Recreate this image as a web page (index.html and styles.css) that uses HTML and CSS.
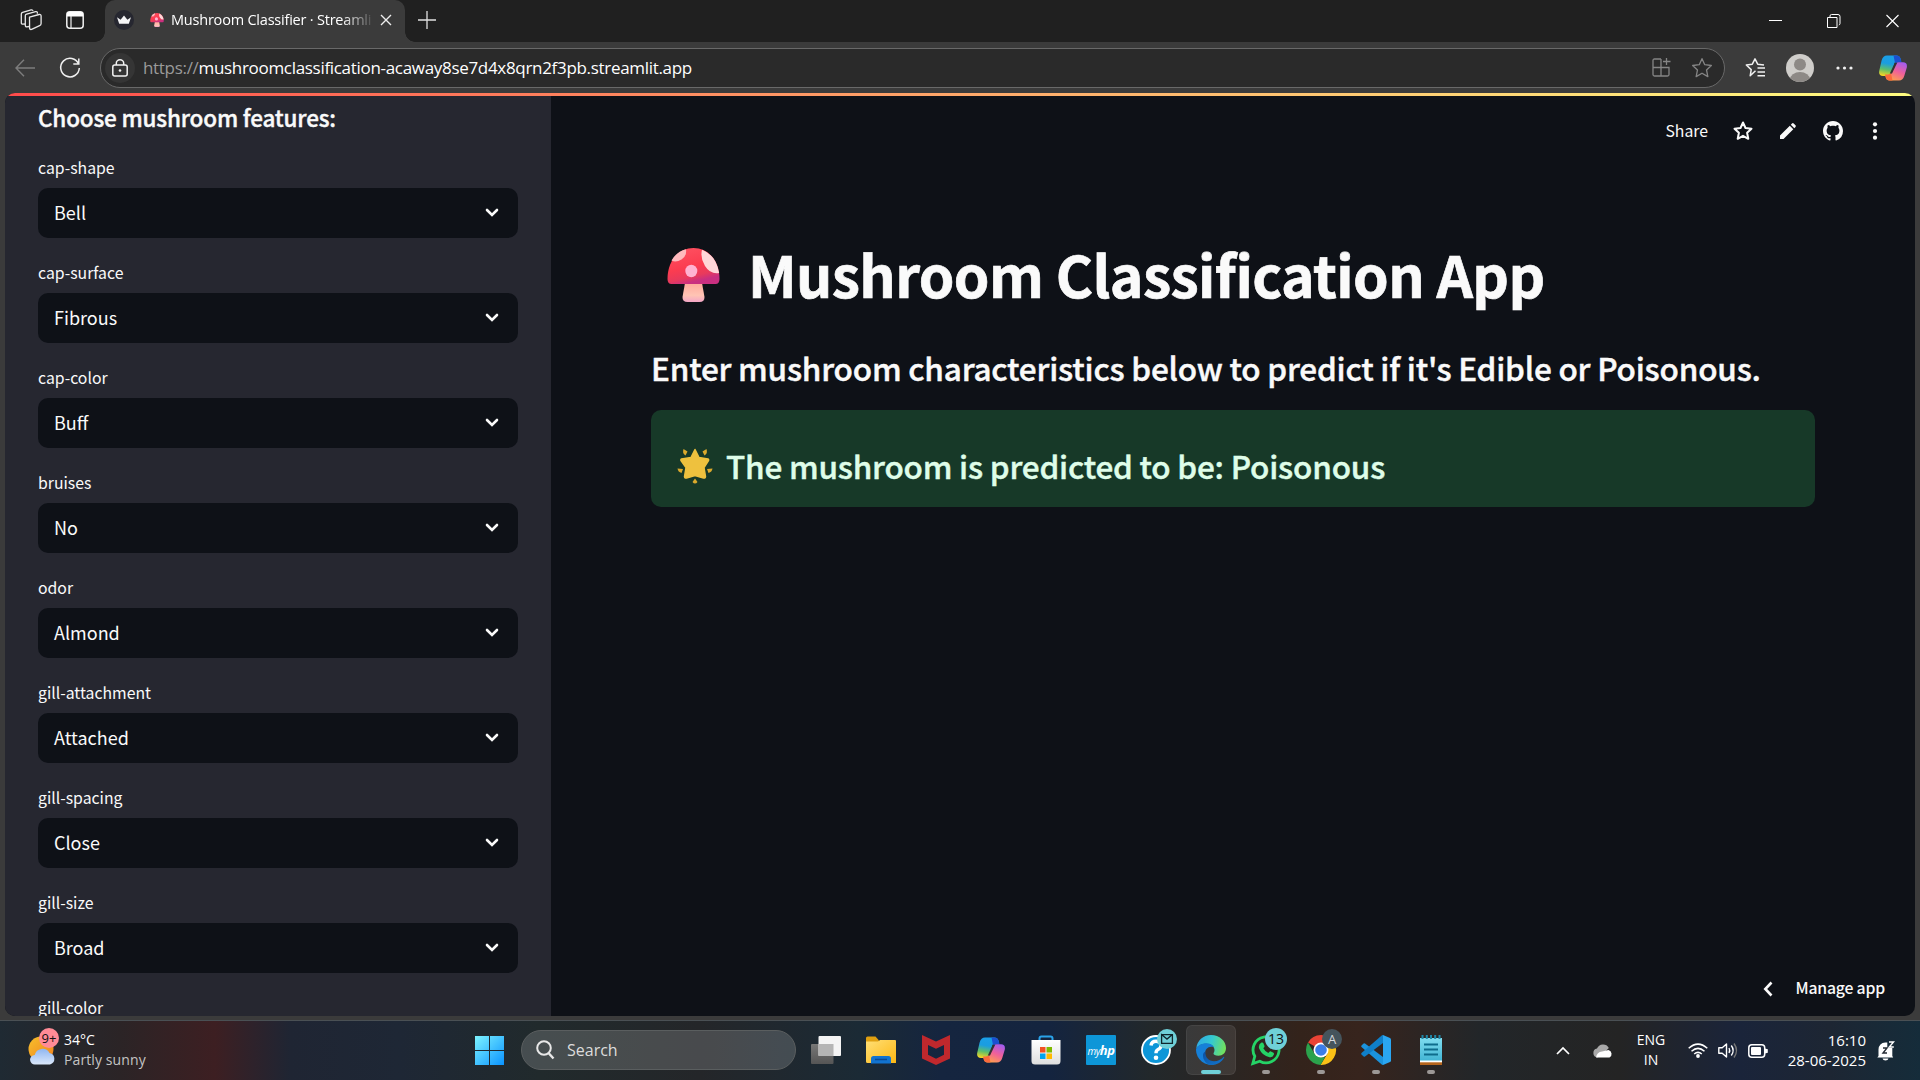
FILE: index.html
```html
<!DOCTYPE html>
<html lang="en">
<head>
<meta charset="utf-8">
<title>Mushroom Classifier · Streamlit</title>
<link rel="stylesheet" href="styles.css">
</head>
<body>
<svg class="defs" width="0" height="0" aria-hidden="true">
  <defs>
    <linearGradient id="cap" x1="0" y1="0" x2=".35" y2="1"><stop offset="0" stop-color="#ff5363"/><stop offset=".6" stop-color="#fb3c50"/><stop offset=".85" stop-color="#e83a5c"/><stop offset="1" stop-color="#c92f80"/></linearGradient>
    <linearGradient id="stem" x1="0" y1="0" x2="0" y2="1"><stop offset="0" stop-color="#ffa99b"/><stop offset=".65" stop-color="#ffc4b4"/><stop offset="1" stop-color="#f3a6c6"/></linearGradient>
    <linearGradient id="cpa" x1=".5" y1="0" x2=".3" y2="1"><stop offset="0" stop-color="#1a9fe8"/><stop offset=".4" stop-color="#1b9de0"/><stop offset=".7" stop-color="#5fbf6a"/><stop offset="1" stop-color="#f5d524"/></linearGradient>
    <linearGradient id="cpb" x1=".8" y1="0" x2=".3" y2="1"><stop offset="0" stop-color="#a15cf0"/><stop offset=".5" stop-color="#f0609a"/><stop offset="1" stop-color="#ffa24a"/></linearGradient>
    <linearGradient id="win" x1="0" y1="0" x2="1" y2="1"><stop offset="0" stop-color="#7df3ff"/><stop offset="1" stop-color="#0a93ff"/></linearGradient>
    <linearGradient id="sun" x1="0" y1="0" x2="1" y2="1"><stop offset="0" stop-color="#f7c02c"/><stop offset="1" stop-color="#f0801e"/></linearGradient>
    <linearGradient id="cloud" x1="0" y1="0" x2="0" y2="1"><stop offset="0" stop-color="#8fb6f0"/><stop offset="1" stop-color="#dbe8fb"/></linearGradient>
    <linearGradient id="folder" x1="0" y1="0" x2="1" y2="1"><stop offset="0" stop-color="#ffdf76"/><stop offset="1" stop-color="#fdb813"/></linearGradient>
    <linearGradient id="edgeTop" x1="0" y1=".3" x2="1" y2=".5"><stop offset="0" stop-color="#2fa9e4"/><stop offset=".5" stop-color="#35c9cf"/><stop offset="1" stop-color="#72e05c"/></linearGradient>
    <linearGradient id="edgeLow" x1="0" y1="0" x2="1" y2="1"><stop offset="0" stop-color="#0c4f9e"/><stop offset="1" stop-color="#1277d0"/></linearGradient>
    <linearGradient id="bag" x1="0" y1="0" x2="0" y2="1"><stop offset="0" stop-color="#ffffff"/><stop offset="1" stop-color="#dedede"/></linearGradient>
    <linearGradient id="note" x1="0" y1="0" x2="0" y2="1"><stop offset="0" stop-color="#7fdcef"/><stop offset="1" stop-color="#3fb3d3"/></linearGradient>
    <linearGradient id="tvBack" x1="0" y1="0" x2="0" y2="1"><stop offset="0" stop-color="#777"/><stop offset="1" stop-color="#555"/></linearGradient>
    <symbol id="mushroom" viewBox="0 0 52 54">
      <path d="M17.500 35h17l2.500 14q.2 5-5 5H20q-5.200 0-5-5z" fill="url(#stem)"/>
      <path d="M0 31C0 13 11 0 26 0s26 13 26 31q0 5-4 5H4q-4 0-4-5z" fill="url(#cap)"/>
      <path d="M4 12.500Q9 3.500 18.500 1.200q1 7-4.500 10.300-5.500 3.300-10 1z" fill="#ffb9bd"/>
      <path d="M34.500 1.700Q48.500 7 51.700 25q-9 1.500-14.200-7-5-8-3-16.300z" fill="#ffd7d9"/>
      <ellipse cx="23.800" cy="23" rx="6" ry="6.200" fill="#ffb3d1"/>
    </symbol>
    <symbol id="copilot" viewBox="0 0 28 26">
      <path d="M8 .5h9.500q3 0 4 3l.7 2.200h-3q-3 0-3.900 3L12.500 18q-1 3-4 3H4q-4.600 0-3.800-5L2.600 5.500Q4 .5 8 .5z" fill="url(#cpa)"/>
      <path d="M14.500.5h3q3 0 4 3l1.200 3.900h-3.200q-2.300 0-3.300 1.600z" fill="#1b50d0"/>
      <path d="M20 25.500h-9.500q-3 0-3.700-3l-.5-2.300H9q2.900 0 3.800-3l2.900-7q1-3 3.900-3H24q4.600 0 3.800 5.200L25.400 20.500Q24 25.500 20 25.500z" fill="url(#cpb)"/>
      <path d="M10.500 25.500q-3 0-3.700-3L6 19.400h3q2 0 3-1.300l1.500 7.400z" fill="#fb6a3c"/>
      <path d="M15.800 7.800h2.400L13 18.500h-2.200z" fill="#333"/>
    </symbol>
    <symbol id="chev" viewBox="0 0 14 10"><path d="M2 2l5 5 5-5" fill="none" stroke="#fafafa" stroke-width="2.600" stroke-linecap="round"/></symbol>
    <symbol id="star" viewBox="0 0 20 20"><path d="M10 1.500l2.500 5.500 6 .7-4.400 4.100 1.200 6L10 14.800 4.700 17.800l1.200-6L1.500 7.700l6-.7z" fill="none" stroke="currentColor" stroke-linejoin="round"/></symbol>
  </defs>
</svg>

<div class="screen">
  <header class="tabstrip">
    <svg class="ic-work" width="22" height="22" viewBox="0 0 22 22"><g fill="none" stroke="#e8e8e8" stroke-width="1.300" stroke-linejoin="round"><path d="M9.500 8.200l9.600-2.700q2-.4 2 1.500v7.500q0 1.700-1.500 2.200l-8 3.700q-2 .5-2-1.500z"/><path d="M9 17.500l-2.200.3q-1.500 0-1.500-1.500V6.800q0-1.200 1.300-1.600l9-2.600q1.600-.3 1.800 1.200v1"/><path d="M5 15l-2.200.2q-1.500 0-1.500-1.500V4.900q0-1.200 1.300-1.600l8.500-2.400q1.500-.4 2 1"/></g></svg>
    <svg class="ic-panel" width="18" height="18" viewBox="0 0 18 18"><rect x=".8" y=".8" width="16.400" height="16.400" rx="3" fill="none" stroke="#f0f0f0" stroke-width="1.500"/><path d="M1 2.500Q1 1 3 1h12q2 0 2 1.500V5.500H1z" fill="#fff"/><path d="M5 5v12" stroke="#f0f0f0" stroke-width="1.200"/></svg>
    <div class="tab">
      <svg class="crown" width="20" height="20" viewBox="0 0 20 20"><circle cx="10" cy="10" r="10" fill="#262730"/><path d="M3 7.200l3.600 2.500L10 5.500l3.400 4.200L17 7.200l-2.200 6.600H5.200z" fill="#f4f4f6"/></svg>
      <svg class="tabshroom" width="14" height="14"><use href="#mushroom"/></svg>
      <span class="tabtitle ui">Mushroom Classifier · Streamli</span>
      <svg class="tabclose" width="12" height="12" viewBox="0 0 12 12"><path d="M1 1l10 10M11 1L1 11" stroke="#eee" stroke-width="1.400"/></svg>
    </div>
    <svg class="plus" width="18" height="18" viewBox="0 0 18 18"><path d="M9 0v18M0 9h18" stroke="#e0e0e0" stroke-width="1.300"/></svg>
    <div class="winctl">
      <svg width="13" height="14" viewBox="0 0 13 14"><path d="M0 6.500h13" stroke="#fff"/></svg>
      <svg width="14" height="14" viewBox="0 0 14 14"><path d="M.5 3.500h9.500v10H.5zM3 3V2q0-1.500 1.500-1.500H11q2 0 2 2V9.500q0 1.200-1.200 1.500" fill="none" stroke="#fff"/></svg>
      <svg width="13" height="14" viewBox="0 0 13 14"><path d="M.5 1l12 12M12.500 1L.5 13" stroke="#fff" stroke-width="1.100"/></svg>
    </div>
  </header>

  <nav class="toolbar">
    <svg class="back" width="20" height="18" viewBox="0 0 20 18"><path d="M9 .7L1 9l8 8.300M1 9h19" fill="none" stroke="#7d7d7d" stroke-width="1.400"/></svg>
    <svg class="reload" width="22" height="22" viewBox="0 0 22 22"><path d="M19.600 7A9.300 9.300 0 1 0 20.300 11M19.800 1.500V7h-5.500" fill="none" stroke="#f0f0f0" stroke-width="1.500"/></svg>
    <div class="address">
      <span class="lock"><svg width="16" height="18" viewBox="0 0 16 18"><rect x=".8" y="6" width="14.400" height="11" rx="2" fill="none" stroke="#f2f2f2" stroke-width="1.500"/><path d="M4.300 6V4.200a3.700 3.400 0 0 1 7.400 0V6" fill="none" stroke="#f2f2f2" stroke-width="1.500"/><circle cx="8" cy="11.500" r="1.300" fill="#f2f2f2"/></svg></span>
      <span class="url ui"><span class="dim">https://</span>mushroomclassification-acaway8se7d4x8qrn2f3pb.streamlit.app</span>
      <svg class="addapp" width="19" height="19" viewBox="0 0 19 19"><path d="M9 1H2.500Q1 1 1 2.500v14Q1 18 2.500 18h13q1.500 0 1.500-1.500V9.500H1M9 1v17M14.500 0v7M11 3.500h7.500" fill="none" stroke="#858585" stroke-width="1.300"/></svg>
      <svg class="addstar" width="22" height="22"><use href="#star"/></svg>
    </div>
    <svg class="favs" width="21" height="20" viewBox="0 0 21 20"><path d="M10.500 13.200l-5.300 5.100 1-6.200-4.900-4.600 6-.8L10 1.300l2.700 5.400 6.300.8M12.500 10.500H20M12.500 14.500H20M12.500 18.300H20" transform="translate(0 -.5)" fill="none" stroke="#f0f0f0" stroke-width="1.500" stroke-linejoin="round"/></svg>
    <svg class="avatar" width="28" height="28" viewBox="0 0 28 28"><clipPath id="av"><circle cx="14" cy="14" r="14"/></clipPath><g clip-path="url(#av)"><path d="M0 0h28v28H0z" fill="#cfcdca"/><circle cx="14" cy="10.500" r="6" fill="#8d8986"/><ellipse cx="14" cy="25.500" rx="10" ry="7.500" fill="#8d8986"/></g></svg>
    <svg class="more" width="17" height="4" viewBox="0 0 17 4"><g fill="#f0f0f0"><circle cx="2" cy="2" r="1.600"/><circle cx="8.500" cy="2" r="1.600"/><circle cx="15" cy="2" r="1.600"/></g></svg>
    <svg class="cop" width="28" height="26"><use href="#copilot"/></svg>
  </nav>

  <div class="viewport">
    <div class="page">
      <div class="progress"></div>
      <aside class="sidebar">
        <h2>Choose mushroom features:</h2>
        <div class="field"><label>cap-shape</label><div class="select">Bell<svg width="14" height="10"><use href="#chev"/></svg></div></div>
        <div class="field"><label>cap-surface</label><div class="select">Fibrous<svg width="14" height="10"><use href="#chev"/></svg></div></div>
        <div class="field"><label>cap-color</label><div class="select">Buff<svg width="14" height="10"><use href="#chev"/></svg></div></div>
        <div class="field"><label>bruises</label><div class="select">No<svg width="14" height="10"><use href="#chev"/></svg></div></div>
        <div class="field"><label>odor</label><div class="select">Almond<svg width="14" height="10"><use href="#chev"/></svg></div></div>
        <div class="field"><label>gill-attachment</label><div class="select">Attached<svg width="14" height="10"><use href="#chev"/></svg></div></div>
        <div class="field"><label>gill-spacing</label><div class="select">Close<svg width="14" height="10"><use href="#chev"/></svg></div></div>
        <div class="field"><label>gill-size</label><div class="select">Broad<svg width="14" height="10"><use href="#chev"/></svg></div></div>
        <div class="field"><label>gill-color</label></div>
      </aside>
      <main class="main">
        <div class="actions">
          <span class="share">Share</span>
          <svg class="a-star" width="20" height="20"><use href="#star"/></svg>
          <svg class="a-pen" width="16" height="16" viewBox="0 0 16 16"><path d="M0 16v-3.500L9.800 2.700l3.500 3.500L3.500 16zM10.800 1.700L12 .5q.8-.8 1.700 0l1.800 1.800q.8.800 0 1.700l-1.200 1.200z" fill="#fafafa"/></svg>
          <svg class="a-git" width="20" height="20" viewBox="0 0 16 16"><path fill="#fafafa" d="M8 0C3.580 0 0 3.580 0 8c0 3.540 2.290 6.530 5.470 7.590.4.070.55-.17.55-.38 0-.19-.01-.82-.01-1.490-2.010.37-2.530-.49-2.690-.94-.09-.23-.48-.94-.82-1.130-.28-.15-.68-.52-.01-.53.63-.01 1.080.58 1.230.82.72 1.210 1.870.87 2.330.66.07-.52.28-.87.51-1.070-1.780-.2-3.640-.89-3.640-3.950 0-.87.31-1.590.82-2.150-.08-.2-.36-1.020.08-2.120 0 0 .67-.21 2.200.82.640-.18 1.320-.27 2-.27s1.360.09 2 .27c1.530-1.040 2.200-.82 2.200-.82.44 1.100.16 1.920.08 2.120.51.56.82 1.270.82 2.150 0 3.070-1.870 3.750-3.650 3.950.29.25.54.73.54 1.480 0 1.070-.01 1.930-.01 2.200 0 .21.15.46.55.38A8.010 8.010 0 0 0 16 8c0-4.420-3.580-8-8-8z"/></svg>
          <svg class="a-dots" width="6" height="18" viewBox="0 0 6 18"><g fill="#fafafa"><circle cx="3" cy="2.300" r="2.100"/><circle cx="3" cy="9" r="2.100"/><circle cx="3" cy="15.700" r="2.100"/></g></svg>
        </div>
        <div class="content">
          <h1><svg width="53" height="54"><use href="#mushroom"/></svg><span>Mushroom Classification App</span></h1>
          <h3>Enter mushroom characteristics below to predict if it's Edible or Poisonous.</h3>
          <div class="alert">
            <svg width="36" height="36" viewBox="0 0 36 36"><g fill="#dba92c"><path d="M18 1.500l4 8 9 1.500q1 .5.500 1.500l-4.500 7 1.500 9q-.2 2-2 1.500L18 27.500 9.500 30q-1.800.5-2-1.500l1.500-9-5-7Q3.500 11.500 4.500 11l9.500-1.500z" fill="#eec13e" stroke="#eec13e" stroke-width="1.500" stroke-linejoin="round"/><path d="M6.500 1l4 2.500-2 4Q5 5.500 6.500 1zM29.500 1l-4 2.500 2 4q3.500-2 2-6.500zM.5 20.500l5.500.5-1.500 4Q1 24 .5 20.500zM35.500 20.500L30 21l1.500 4q3.500-1 4-4.500zM18 30.500l2.500 3.500q-2.500 3-5 0z"/></g></svg>
            <span>The mushroom is predicted to be: Poisonous</span>
          </div>
        </div>
        <div class="manage"><svg width="10" height="16" viewBox="0 0 10 16"><path d="M8.500 1.500L2.300 8l6.200 6.500" fill="none" stroke="#fafafa" stroke-width="2.600"/></svg><span>Manage app</span></div>
      </main>
    </div>
  </div>

  <footer class="taskbar ui">
    <div class="weather">
      <div class="wicon">
        <svg width="30" height="40" viewBox="0 0 30 40"><circle cx="13" cy="21" r="12.500" fill="url(#sun)"/><path d="M7 36.500a4.800 4.800 0 0 1-.3-9.600A8 8 0 0 1 21.500 25a5.900 5.900 0 0 1 .5 11.500z" fill="url(#cloud)"/></svg>
        <span class="badge">9+</span>
      </div>
      <div class="wtext"><span>34°C</span><span class="soft">Partly sunny</span></div>
    </div>
    <div class="apps">
      <svg class="start" width="29" height="29" viewBox="0 0 29 29"><path d="M0 0h14v14H0zM15 0h14v14H15zM0 15h14v14H0zM15 15h14v14H15z" fill="url(#win)"/></svg>
      <div class="search"><svg width="19" height="20" viewBox="0 0 19 20"><circle cx="8" cy="8" r="6.800" fill="none" stroke="#e8e8e8" stroke-width="2"/><path d="M12.500 13l5 5.500" stroke="#e8e8e8" stroke-width="2.400"/></svg><span>Search</span></div>
      <div class="tile"><svg width="30" height="28" viewBox="0 0 30 28"><rect x="0" y="8" width="22.500" height="20" rx="1" fill="url(#tvBack)"/><rect x="7.500" width="22.500" height="20" rx="1" fill="#f4f4f4"/><path d="M7.500 8h15v12h-15z" fill="#b5b5b5"/></svg></div>
      <div class="tile"><svg width="30" height="28" viewBox="0 0 30 28"><path d="M0 2q0-1.500 1.500-1.500h8L13 4.500V9H0z" fill="#e0a010"/><path d="M0 5.500h12L14 4h15q1 0 1 1v22H1.500Q0 27 0 25.500z" fill="url(#folder)"/><path d="M5 27.500v-5q0-2.500 2.500-2.500h15q2.500 0 2.500 2.500v5z" fill="#1273cf"/><path d="M9 23.500h12" stroke="#0b4a94" stroke-width="1.500"/></svg></div>
      <div class="tile"><svg width="28" height="30" viewBox="0 0 28 30"><path d="M0 0l14 6.500L28 0v23.500L14 30 0 23.500zM6 10v9.700l8 4 8-4V10l-8 3.700z" fill="#c0282d" fill-rule="evenodd"/></svg></div>
      <div class="tile"><svg width="28" height="26"><use href="#copilot"/></svg></div>
      <div class="tile"><svg width="30" height="30" viewBox="0 0 30 30"><path d="M8.500 7V3.500Q8.500 1.500 10.500 1.500h9q2 0 2 2V7" fill="none" stroke="#2aa3ea" stroke-width="2"/><path d="M.5 5h29v21q0 3.500-3.500 3.500H4Q.5 29.500.5 26z" fill="url(#bag)"/><path d="M9 12h5.500v5.500H9z" fill="#f25022"/><path d="M15.500 12H21v5.500h-5.500z" fill="#7fba00"/><path d="M9 18.500h5.500V24H9z" fill="#00a4ef"/><path d="M15.500 18.500H21V24h-5.500z" fill="#ffb900"/></svg></div>
      <div class="tile"><span class="hp">my<b>hp</b></span></div>
      <div class="tile"><svg width="30" height="30" viewBox="0 0 30 30"><circle cx="15" cy="15" r="14" fill="#0d96d8" stroke="#fff" stroke-width="1.800"/><path d="M10 10.500q.5-4.300 5-4.300t5 4q0 3-3 4.300-2 1-2 3.700" fill="none" stroke="#fff" stroke-width="3.400"/><circle cx="15" cy="22.800" r="2.300" fill="#fff"/></svg>
        <span class="badge teal"><svg width="12" height="10" viewBox="0 0 12 10"><path d="M.6.6h10.800v8.800H.6V.6l5.400 4.500L11.400.6" fill="none" stroke="#10262c" stroke-width="1.300"/></svg></span></div>
      <div class="tile active"><svg width="30" height="30" viewBox="0 0 30 30"><path d="M.3 13.500C1 5.500 7.200 0 15 0c8.500 0 15 6 15 13 0 5-3.500 7.700-7.500 7.700-3.500 0-5-1.200-5-2.200 0-.8 1-1.300 1-3.500 0-3.500-3.500-6.300-8-6.300C5.500 8.700 2 10.700.3 13.500z" fill="url(#edgeTop)"/><path d="M.1 13.800C1.500 10.500 5.500 8.200 10.300 8.200c3.500 0 6.500 1.500 7.700 4-5.500-1.700-9 2-9 6.300 0 5.500 4 10.200 10 10.800A15 15 0 0 1 0 15z" fill="#1680d8"/><path d="M9.500 16.500c-.8 6 3.500 9.700 8.500 9.700 4 0 7-1.500 9.500-4.200.5-.4 1 0 .7.500C26 27 21 30 15.500 30 11 30 6.500 25 7 20c.2-1.700 1.200-3 2.500-3.500z" fill="url(#edgeLow)"/></svg><i class="dot wide"></i></div>
      <div class="tile"><svg width="30" height="30" viewBox="0 0 30 30"><path d="M1.800 28.500l2-7.200a13 13 0 1 1 5 4.900z" fill="none" stroke="#25d366" stroke-width="2.800"/><path d="M10.500 7.500q1.500-.5 2 1l1 2.500q.3.800-1.200 2.300 1.800 3.300 5 4.600 1.500-1.900 2.200-1.600l3 1.500q.8.500.3 2-1 2.700-4.300 2.500Q11 20.500 8 13.200q-.7-4 2.500-5.700z" fill="#25d366"/></svg><span class="badge teal count">13</span><i class="dot"></i></div>
      <div class="tile"><svg width="30" height="30" viewBox="0 0 30 30"><path d="M15 15L2 7.500A15 15 0 0 1 28 7.500z" fill="#ea4335"/><path d="M28 7.500A15 15 0 0 1 14.500 30L21.500 18.500 20 7.500z" fill="#fbc116"/><path d="M2 7.500L8.500 18.700l6.500 3.500h4L14.500 30A15 15 0 0 1 2 7.500z" fill="#2ba24c"/><circle cx="15" cy="15" r="7.500" fill="#fff"/><circle cx="15" cy="15" r="5.800" fill="#3b7de9"/></svg><span class="badge slate">A</span><i class="dot"></i></div>
      <div class="tile"><svg width="30" height="30" viewBox="0 0 30 30"><path d="M22 30v-8L4 8.500q-.7-.5-1.400 0L.5 10.400q-.7.800 0 1.500l20.200 17.700q.6.500 1.300.4z" fill="#1b93dd"/><path d="M22 0v8L4 21.500q-.7.500-1.400 0L.5 19.600q-.7-.8 0-1.500L20.700.4Q21.300-.1 22 0z" fill="#0f7fc9"/><path d="M22 0l7 3q1 .5 1 1.500v21q0 1-1 1.500l-7 3z" fill="#2aa6f2"/></svg><i class="dot"></i></div>
      <div class="tile"><svg width="24" height="30" viewBox="0 0 24 30"><path d="M1 3h22v24H1z" fill="url(#note)"/><path d="M1 26.500h22V30H1z" fill="#b5651d"/><path d="M1 25.500h22v1.800H1z" fill="#fff"/><path d="M5 9.500h14M5 14.500h14M5 19.500h14" stroke="#0e6c8c" stroke-width="1.800"/><path d="M3.500 0v4M7.800 0v4M12 0v4M16.200 0v4M20.500 0v4" stroke="#1f86a6" stroke-width="2"/></svg><i class="dot"></i></div>
    </div>
    <div class="tray">
      <svg class="t-up" width="14" height="9" viewBox="0 0 14 9"><path d="M1 8l6-6 6 6" fill="none" stroke="#fff" stroke-width="1.700"/></svg>
      <svg class="t-cloud" width="21" height="14" viewBox="0 0 21 14"><path d="M4.500 13.500A4.500 4.500 0 0 1 4 4.600 6.500 6.500 0 0 1 15.800 4L9 11z" fill="#a8a8a8"/><path d="M3 13.500Q4 8 9 7.500l6.500-1.400a4 4 0 0 1 1 7.400z" fill="#fff"/></svg>
      <div class="lang"><span>ENG</span><span>IN</span></div>
      <svg class="t-wifi" width="20" height="15" viewBox="0 0 20 15"><g fill="none" stroke="#fff" stroke-width="1.500"><path d="M.7 5.200q9.300-8.200 18.600 0"/><path d="M3.500 8.200q6.500-5.700 13 0"/><path d="M6.200 11q3.800-3.200 7.600 0"/></g><circle cx="10" cy="13" r="1.900" fill="#fff"/></svg>
      <svg class="t-vol" width="21" height="17" viewBox="0 0 21 17"><g fill="none" stroke="#fff" stroke-width="1.400" stroke-linejoin="round"><path d="M.8 5.800h3.400L8.500 2v13L4.200 11.200H.8z"/><path d="M11 6q1.500 2.500 0 5M13.300 3.500q3.700 5 0 10"/><path d="M16 1.500q5 7 0 14" stroke="#777"/></g></svg>
      <svg class="t-bat" width="20" height="14" viewBox="0 0 20 14"><rect x=".8" y=".8" width="15.900" height="12.400" rx="3" fill="none" stroke="#fff" stroke-width="1.500"/><rect x="3" y="3" width="10" height="8" rx="1" fill="#fff"/><path d="M17 4.500l2.800.7v3.600l-2.800.7z" fill="#fff"/></svg>
      <div class="clock"><span>16:10</span><span>28-06-2025</span></div>
      <svg class="t-bell" width="18" height="20" viewBox="0 0 18 20"><path d="M1.500 15V8.500Q2 1.800 8.300 1.500h2v5l5 .5v8l.9 1.500H.3zM5.500 17.500h6q-.5 2-3 2t-3-2z" fill="#fff"/><path d="M6 7h4l-4 5h4" fill="none" stroke="#242a33" stroke-width="1.400"/><path d="M12 1h4.500L12.300 6h4.500" fill="none" stroke="#fff" stroke-width="1.400"/></svg>
    </div>
  </footer>
</div>
</body>
</html>
```
FILE: styles.css
```css
* { box-sizing: border-box; margin: 0; padding: 0; }
body { background: #3b3b3b; overflow: hidden; }
svg { flex: none; display: block; overflow: visible; }
.defs { position: absolute; }
.ui { font-family: "Open Sans", "Noto Sans", sans-serif; }
.screen { width: 1920px; height: 1080px; display: flex; flex-direction: column; white-space: nowrap; }

.tabstrip { height: 42px; flex: none; background: #202020; display: flex; align-items: center; padding: 0 21px 0 20px; }
.ic-work { margin-top: -2px; }
.ic-panel { margin: -2px 0 0 24px; }
.tab { position: relative; width: 300px; height: 42px; margin-left: 21px; background: #3b3b3b; border-radius: 10px 10px 0 0; display: flex; align-items: center; padding: 0 13px 3px 9px; }
.tab::before, .tab::after { content: ""; position: absolute; bottom: 0; width: 10px; height: 10px; }
.tab::before { left: -10px; background: radial-gradient(circle at 0 0, transparent 9.5px, #3b3b3b 10px); }
.tab::after { right: -10px; background: radial-gradient(circle at 100% 0, transparent 9.5px, #3b3b3b 10px); }
.tabshroom { margin-left: 16px; }
.tabtitle { width: 201px; margin-left: 7px; font-size: 14.5px; letter-spacing: -.21px; line-height: 22px; color: #fff; -webkit-mask-image: linear-gradient(90deg, #000 85%, rgba(0,0,0,.1)); mask-image: linear-gradient(90deg, #000 85%, rgba(0,0,0,.1)); }
.tabclose { margin-left: auto; }
.plus { margin: -3px 0 0 13px; }
.winctl { display: flex; gap: 45px; margin-left: auto; }

.toolbar { height: 51px; flex: none; display: flex; align-items: center; padding: 0 13px 0 15px; }
.reload { margin-left: 24px; }
.address { width: 1625px; height: 40px; margin-left: 19px; border: 1px solid #696969; border-radius: 20px; background: #2a2a2a; display: flex; align-items: center; padding: 0 11px 0 4px; color: #858585; }
.lock { width: 30px; height: 30px; border-radius: 50%; background: #353535; display: grid; place-items: center; }
.url { margin-left: 8px; font-size: 17px; letter-spacing: -.31px; color: #fff; padding-bottom: 1px; }
.dim { color: #9a9a9a; }
.addapp { margin-left: auto; }
.addstar { margin-left: 20px; stroke-width: 1.2; }
.favs { margin-left: 20px; }
.avatar { margin-left: 20px; }
.more { margin-left: 22px; }
.cop { margin-left: auto; }

.viewport { flex: 1; padding: 0 5px 4px; }
.page { position: relative; height: 923px; overflow: hidden; border-radius: 10px; background: #0e1117; display: flex; font-family: "Noto Sans CJK SC", "Open Sans", sans-serif; color: #fafafa; }
.progress { position: absolute; z-index: 2; left: 0; right: 0; top: 0; height: 3px; background: linear-gradient(90deg, #ff4b4b, #ffa86a 50%, #fffd80); }
.sidebar { width: 546px; flex: none; height: 923px; background: #262730; padding: 7px 33px 0; }
.sidebar h2 { height: 34px; line-height: 34px; font-size: 22.5px; font-weight: 500; letter-spacing: -.17px; -webkit-text-stroke: .4px; margin-bottom: 22px; }
.field { height: 105px; }
.field label { display: block; height: 24px; line-height: 24px; font-size: 15.8px; margin-bottom: 8px; }
.select { height: 50px; width: 480px; border-radius: 10px; background: #0e1117; display: flex; align-items: center; justify-content: space-between; padding: 0 19px 2px 16px; font-size: 18px; }
.select svg { margin-top: 2px; }
.main { flex: 1; display: flex; flex-direction: column; }
.actions { height: 75px; display: flex; align-items: center; justify-content: flex-end; padding-right: 37px; font-size: 15.8px; }
.a-star { margin-left: 25px; stroke-width: 2; }
.a-pen { margin-left: 27px; }
.a-git { margin-left: 27px; }
.a-dots { margin-left: 29px; }
.content { width: 1164px; margin-left: 100px; flex: 1; }
.content h1 { height: 90px; margin-top: 62px; display: flex; align-items: center; gap: 28px; padding-left: 16px; font-size: 57px; font-weight: 700; letter-spacing: -.6px; line-height: 86px; -webkit-text-stroke: .7px; }
.content h1 span { height: 90px; }
.content h3 { height: 52px; line-height: 52px; margin-top: 21px; font-size: 31.5px; font-weight: 500; letter-spacing: -.2px; -webkit-text-stroke: .45px; }
.alert { margin-top: 17px; height: 97px; border-radius: 10px; background: #173928; color: #dffde9; display: flex; align-items: center; gap: 13px; padding: 14px 26px 0; font-size: 31.5px; font-weight: 500; letter-spacing: -.2px; -webkit-text-stroke: .45px; }
.alert span { padding-bottom: 2px; }
.manage { display: flex; align-items: center; justify-content: flex-end; gap: 23px; padding: 0 30px 17px 0; font-size: 15.8px; font-weight: 500; letter-spacing: -.2px; }
.manage svg { margin-top: 2px; }

.taskbar { height: 60px; flex: none; display: flex; color: #fff; border-top: 1px solid #4a5054; font-size: 14px; background: linear-gradient(90deg, #1f2a33 0, #2b2426 120px, #3d1f22 215px, #1f2533 290px, #1e2735 400px, #212a2c 540px, #242629 700px, #1b2a35 860px, #15253f 940px, #14243f 1050px, #22282b 1150px, #33231b 1300px, #37241d 1360px, #222629 1480px, #242424 1620px, #1a243a 1740px, #1d2633 1830px, #152c3a 1920px); }
.weather { width: 475px; display: flex; padding-left: 28px; }
.wicon { position: relative; width: 36px; padding-top: 7px; }
.badge { position: absolute; width: 20px; height: 20px; border-radius: 50%; background: #ff8b96; color: #111; font-size: 13px; line-height: 20px; text-align: center; display: grid; place-items: center; }
.wicon .badge { left: 11px; top: 7px; }
.wtext, .lang, .clock { display: flex; flex-direction: column; line-height: 20px; padding-top: 9px; }
.soft { color: #c4c4c4; letter-spacing: .1px; }
.apps { display: flex; align-items: center; padding-bottom: 1px; }
.search { width: 275px; height: 40px; margin: 0 0 0 17px; border: 1px solid #5a5e5f; border-radius: 20px; background: rgba(255,255,255,.17); color: #dcdcdc; font-size: 16px; display: flex; align-items: center; gap: 12px; padding-left: 14px; }
.tile { position: relative; width: 50px; height: 50px; margin-left: 5px; display: grid; place-items: center; border-radius: 6px; }
.active { background: rgba(255,255,255,.09); box-shadow: inset 0 0 0 1px rgba(255,255,255,.06); }
.tile .badge { left: 26px; top: 4px; }
.tile .count { left: 24px; top: 3px; width: 22px; height: 22px; font-size: 14px; }
.teal { background: #6fd0d8; }
.slate { background: #45545c; color: #d5dade; }
.dot { position: absolute; left: 21px; bottom: 1px; width: 8px; height: 4px; border-radius: 2px; background: #9c9896; }
.dot.wide { left: 15px; width: 20px; background: #6fd0d8; }
.hp { width: 30px; height: 30px; border-radius: 1px; background: #0d96d8; font: italic 10px/30px "Open Sans", sans-serif; letter-spacing: -.5px; text-align: center; }
.hp b { font-size: 13px; }
.tray { margin-left: auto; display: flex; align-items: center; padding-right: 25px; }
.tray .lang, .tray .clock { height: 59px; }
.lang { align-items: center; width: 40px; margin-left: 17px; }
.clock { align-items: flex-end; width: 80px; margin-left: 18px; font-size: 15px; }
.t-cloud { margin-left: 23px; }
.t-wifi { margin-left: 17px; }
.t-vol { margin-left: 10px; }
.t-bat { margin-left: 9px; }
.t-bell { margin-left: 11px; }
```
